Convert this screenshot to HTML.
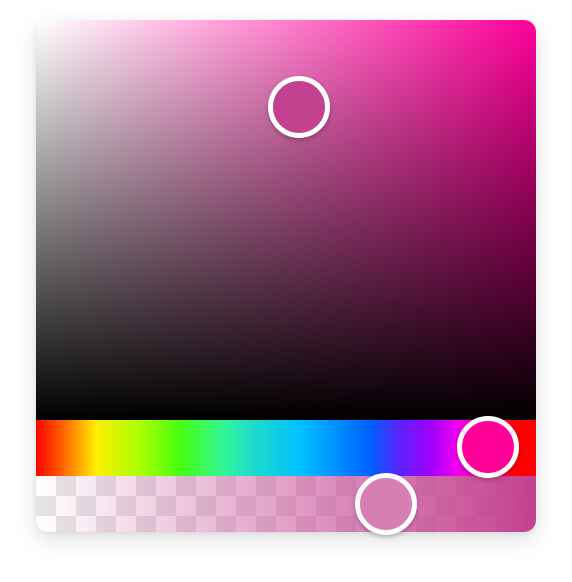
<!DOCTYPE html>
<html><head><style>
html,body{margin:0;padding:0;background:#fff;width:572px;height:582px;overflow:hidden}
.card{position:absolute;left:36px;top:20px;width:500px;height:512px;border-radius:12px;overflow:hidden;box-shadow:0 8px 24px rgba(0,0,0,0.12),0 2px 6px rgba(0,0,0,0.05)}
.sat{position:absolute;left:0;top:0;width:500px;height:400px;background:linear-gradient(to top,#000,rgba(0,0,0,0)),linear-gradient(to right,#fff,#ff0099)}
.hue{position:absolute;left:0;top:400px;width:500px;height:56px;background:linear-gradient(to right,#ff0000 0%,#ff7000 6%,#ffee00 12%,#a8ff00 21%,#44ff10 29%,#33f890 37%,#20dcc8 43%,#00c0ff 53%,#0060ff 67%,#6020ff 73%,#a000ff 79%,#f000f0 84%,#ff0099 90%,#ff0000 96%,#ff0000 100%)}
.alpha{position:absolute;left:0;top:456px;width:500px;height:56px;background:linear-gradient(to right,rgba(196,65,143,0),rgba(196,65,143,1)),repeating-conic-gradient(#e6e6e6 0 25%,#fff 0 50%) 0 0/40px 40px}
.t{position:absolute;width:52px;height:52px;border:5px solid #fff;border-radius:50%;box-shadow:0 2px 5px rgba(0,0,0,0.25)}
</style></head><body>
<div class="card">
<div class="sat"></div><div class="hue"></div><div class="alpha"></div>
</div>
<div class="t" style="left:268px;top:76px;background:#c4418f"></div>
<div class="t" style="left:457px;top:416px;background:#ff0099"></div>
<div class="t" style="left:355px;top:473px;background:#d57fb2"></div>
</body></html>
